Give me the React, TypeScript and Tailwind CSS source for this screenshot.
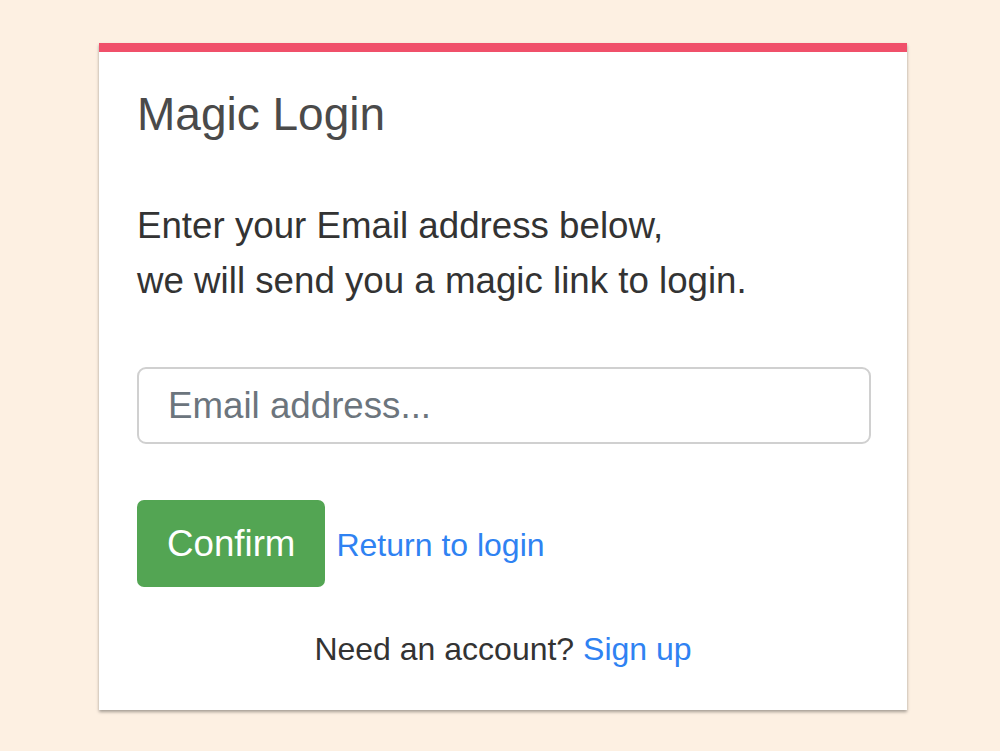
import React, { useState } from 'react';

export default function App() {
  const [email, setEmail] = useState('');

  return (
    <div
      className="min-h-[751px] w-full bg-[#fdf0e2] pt-[43px]"
      style={{ fontFamily: '"Liberation Sans", Arial, sans-serif' }}
    >
      <div className="ml-[99px] w-[808px] h-[667px] bg-white shadow-[0_2px_3px_rgba(0,0,0,0.35)]">
        <div className="h-[9px] bg-[#f0506a]" />
        <div className="px-[38px] pt-[35px]">
          <h1 className="text-[46px] leading-[55px] text-[#4a4a4a]">Magic Login</h1>

          <p className="mt-[56px] text-[36.7px] leading-[55px] text-[#333333]">
            Enter your Email address below,
            <br />
            we will send you a magic link to login.
          </p>

          <input
            type="email"
            value={email}
            onChange={(e) => setEmail(e.target.value)}
            placeholder="Email address..."
            className="mt-[59px] block w-[734px] h-[77px] rounded-[9px] border-2 border-[#d0d0d0] px-[29px] text-[36.7px] text-[#333333] placeholder:text-[#6c757d] outline-none"
          />

          <div className="mt-[56px] flex items-baseline gap-[11px]">
            <button className="h-[87px] px-[30px] rounded-[7px] bg-[#53a553] text-white text-[36.7px] leading-[55px]">
              Confirm
            </button>
            <a href="#" className="text-[32px] leading-[48px] text-[#2f82f2]">
              Return to login
            </a>
          </div>

          <p className="mt-[38px] text-center text-[32px] leading-[48px] text-[#333333]">
            Need an account? <a href="#" className="text-[#2f82f2]">Sign up</a>
          </p>
        </div>
      </div>
    </div>
  );
}
